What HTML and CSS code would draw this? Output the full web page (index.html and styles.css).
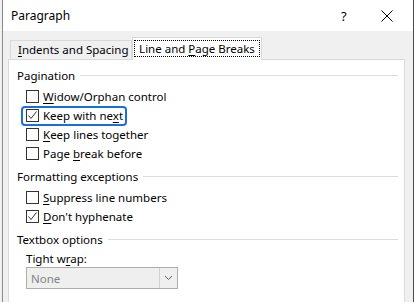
FILE: index.html
```html
<!DOCTYPE html>
<html lang="en">
<head>
    <meta charset="UTF-8">
    <title>Paragraph</title>
    <link rel="stylesheet" href="styles.css">
</head>
<body>
    <div class="screen">
        <div class="dialog">
            <!-- Title bar -->
            <div class="titlebar">
                <span class="title">Paragraph</span>
                <span class="help">?</span>
                <span class="close">
                    <svg width="12" height="12" viewBox="0 0 12 12"><path d="M0.5 0.5 L11.5 11.5 M11.5 0.5 L0.5 11.5" stroke="#000" stroke-width="1" fill="none"/></svg>
                </span>
            </div>

            <div class="body">
                <div class="tabs">
                    <div class="tab"><u>I</u>ndents and Spacing</div>
                    <div class="tab active"><span class="tab-focus">Line and <u>P</u>age Breaks</span></div>
                </div>

                <div class="panel">
                    <div class="group">
                        <div class="group-head"><span>Pagination</span><span class="rule"></span></div>
                        <div class="row"><span class="check"><span class="box"></span><span><u>W</u>idow/Orphan control</span></span></div>
                        <div class="row"><span class="check focused"><span class="box checked"><svg width="11" height="11" viewBox="0 0 11 11"><path d="M1.5 5.5 L4 8.5 L9.5 1.5" stroke="#333" stroke-width="1" fill="none"/></svg></span><span>Keep with ne<u>x</u>t</span></span></div>
                        <div class="row"><span class="check"><span class="box"></span><span><u>K</u>eep lines together</span></span></div>
                        <div class="row"><span class="check"><span class="box"></span><span>Page <u>b</u>reak before</span></span></div>
                    </div>

                    <div class="group">
                        <div class="group-head"><span>Formatting exceptions</span><span class="rule"></span></div>
                        <div class="row"><span class="check"><span class="box"></span><span><u>S</u>uppress line numbers</span></span></div>
                        <div class="row"><span class="check"><span class="box checked"><svg width="11" height="11" viewBox="0 0 11 11"><path d="M1.5 5.5 L4 8.5 L9.5 1.5" stroke="#333" stroke-width="1" fill="none"/></svg></span><span><u>D</u>on't hyphenate</span></span></div>
                    </div>

                    <div class="group">
                        <div class="group-head"><span>Textbox options</span><span class="rule"></span></div>
                        <div class="field-label">Tight w<u>r</u>ap:</div>
                        <div class="select">
                            <span class="select-value">None</span>
                            <span class="select-btn">
                                <svg width="9" height="6" viewBox="0 0 9 6"><path d="M1 1 L4.5 4.5 L8 1" stroke="#606060" stroke-width="1" fill="none"/></svg>
                            </span>
                        </div>
                    </div>
                </div>
            </div>
        </div>
        <div class="edge"></div>
    </div>
</body>
</html>
```

FILE: styles.css
```css
body {
    margin: 0;
    font-family: "Noto Sans", sans-serif;
    font-size: 11.5px;
    color: #000;
    background-color: #f0f0f0;
}
u {
    text-decoration-thickness: 1px;
    text-underline-offset: 2px;
}
.screen {
    display: flex;
    height: 302px;
    overflow: hidden;
    padding-left: 2px;
}
.dialog {
    width: 410px;
    border-left: 1px solid #8a8a8a;
    border-right: 1px solid #4a4a4a;
    background-color: #f0f0f0;
}
.edge {
    flex: 1;
    background-color: #fff;
}

/* title bar */
.titlebar {
    height: 31px;
    background-color: #fff;
    display: flex;
    align-items: center;
    padding-left: 8px;
}
.title {
    font-size: 12px;
    flex: 1;
}
.help {
    font-size: 13px;
    width: 40px;
}
.close {
    width: 32px;
    display: flex;
}

/* tabs */
.body {
    padding: 7px 8px 0 5px;
}
.tabs {
    display: flex;
    align-items: flex-end;
    margin-left: 2px;
    height: 21px;
    position: relative;
    z-index: 1;
}
.tab {
    height: 18px;
    line-height: 18px;
    padding-left: 7px;
    width: 113px;
    border: 1px solid #d9d9d9;
    border-bottom: none;
}
.tab.active {
    width: 128px;
    height: 22px;
    padding-left: 0;
    margin-bottom: -1px;
    background-color: #fff;
    display: flex;
    align-items: center;
    justify-content: center;
}
.tab-focus {
    border: 1px dotted #000;
    line-height: 15px;
    padding: 0 4px;
    margin-top: -2px;
}

/* panel */
.panel {
    border: 1px solid #d9d9d9;
    background-color: #fff;
    padding: 6px 6px 20px 8px;
}
.group {
    margin-bottom: 4px;
}
.group-head {
    display: flex;
    align-items: center;
    height: 18px;
    gap: 5px;
    margin-bottom: 3px;
}
.rule {
    flex: 1;
    height: 1px;
    background-color: #dcdcdc;
}
.row {
    height: 19px;
    padding-left: 9px;
    display: flex;
    align-items: center;
}
.check {
    display: inline-flex;
    align-items: center;
    gap: 4px;
    height: 17px;
}
.check.focused {
    position: relative;
}
.check.focused::after {
    content: '';
    position: absolute;
    top: -1px;
    bottom: -2px;
    left: -5px;
    right: -4px;
    border: 2px solid #1a6ee0;
    border-radius: 4px;
}
.box {
    width: 11px;
    height: 11px;
    border: 1px solid #333;
    display: flex;
    align-items: center;
    justify-content: center;
}

/* textbox options */
.field-label {
    padding-left: 9px;
    height: 16px;
    line-height: 16px;
}
.select {
    margin-left: 9px;
    width: 150px;
    height: 20px;
    border: 1px solid #adadad;
    background-color: #efefef;
    display: flex;
    align-items: center;
}
.select-value {
    flex: 1;
    color: #838383;
    padding-left: 4px;
}
.select-btn {
    width: 17px;
    height: 20px;
    border-left: 1px solid #d0d0d0;
    display: flex;
    align-items: center;
    justify-content: center;
}
```
